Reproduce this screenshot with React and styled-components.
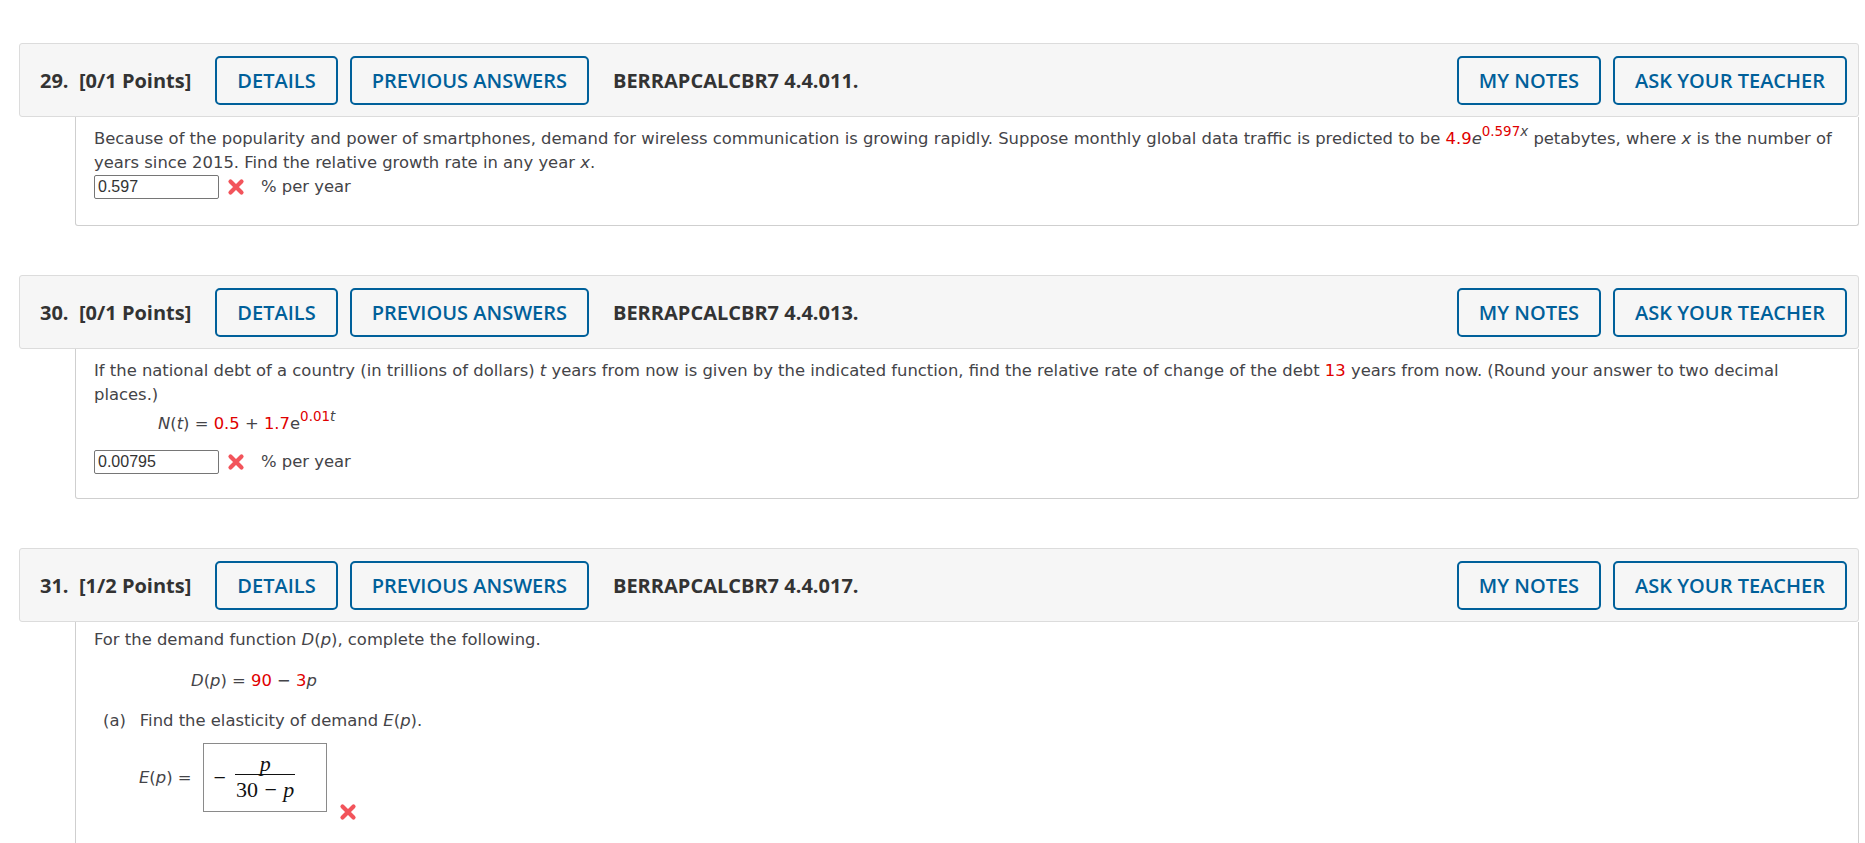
import React from 'react';
import styled, { createGlobalStyle } from 'styled-components';

const GlobalStyle = createGlobalStyle`
  body {
    margin: 0;
    background: #ffffff;
  }
`;

const Page = styled.div`
  padding: 43px 6px 0 19px;
  display: flex;
  flex-direction: column;
  gap: 49px;
`;

const Question = styled.section`
  display: flex;
  flex-direction: column;
`;

const Header = styled.div`
  display: flex;
  align-items: center;
  height: 72px;
  padding: 0 11px 0 20px;
  background: #f6f6f6;
  border: 1px solid #dcdcdc;
  border-radius: 3px;
  font-family: 'Open Sans', sans-serif;
`;

const Label = styled.span`
  font-size: 20px;
  font-weight: 700;
  color: #333333;
  white-space: pre;
  margin-right: 24px;
`;

const Code = styled.span`
  font-size: 20px;
  font-weight: 700;
  color: #333333;
  margin-left: 24px;
  flex: 1;
`;

const Button = styled.button`
  height: 49px;
  padding: 0 20px;
  margin-left: ${p => (p.$first ? '0' : '12px')};
  background: transparent;
  border: 2px solid #00609a;
  border-radius: 5px;
  color: #00609a;
  font-family: 'Open Sans', sans-serif;
  font-size: 20px;
  font-weight: 600;
  cursor: pointer;
`;

const Body = styled.div`
  margin-left: 56px;
  border: 1px solid #cfcfcf;
  border-top: none;
  border-radius: 0 0 3px 3px;
  padding: ${p => p.$pad || '10px 18px 26px'};
  font-family: 'DejaVu Sans', Verdana, sans-serif;
  font-size: 16.4px;
  line-height: 24px;
  color: #444448;
`;

const Para = styled.p`
  margin: 0;
`;

const Red = styled.span`
  color: #e00000;
`;

const Sup = styled.sup`
  font-size: 0.82em;
  line-height: 0;
  vertical-align: 0.6em;
`;

const Formula = styled.div`
  margin: ${p => p.$m || '5px 0 0 64px'};
`;

const AnswerRow = styled.div`
  display: flex;
  align-items: center;
  margin-top: ${p => p.$mt || '0'};
`;

const Input = styled.div`
  width: 125px;
  height: 24px;
  box-sizing: border-box;
  border: 1px solid #767676;
  border-radius: 2px;
  padding: 0 3px;
  font-family: 'Liberation Sans', Arial, sans-serif;
  font-size: 16px;
  line-height: 22px;
  color: #333;
`;

const Unit = styled.span`
  margin-left: 16px;
`;

const Part = styled.div`
  display: flex;
  gap: 14px;
  margin: 16px 0 0 9px;
`;

const MathRow = styled.div`
  display: flex;
  align-items: center;
  margin: 10px 0 0 45px;
`;

const MathBox = styled.div`
  display: flex;
  align-items: center;
  width: 124px;
  height: 69px;
  box-sizing: border-box;
  border: 1px solid #8a8a8a;
  padding-left: 10px;
  margin-left: 11px;
  font-family: 'Liberation Serif', 'Times New Roman', serif;
  font-size: 22px;
  color: #111;
`;

const Frac = styled.span`
  display: inline-flex;
  flex-direction: column;
  align-items: center;
  margin-left: 9px;
`;

const Num = styled.span`
  font-style: italic;
  line-height: 20px;
  border-bottom: 1.3px solid #111;
  align-self: stretch;
  text-align: center;
`;

const Den = styled.span`
  line-height: 22px;
  padding: 4px 1px 0;
  word-spacing: 1px;
`;

const Wrong = () => (
  <svg width="18" height="18" viewBox="0 0 18 18">
    <path d="M3.5 3.5 L14.5 14.5 M14.5 3.5 L3.5 14.5" stroke="#f2545b" strokeWidth="4.2" strokeLinecap="round" />
  </svg>
);

const IconWrap = styled.span`
  display: inline-flex;
  margin-left: ${p => p.$ml || '8px'};
  align-self: ${p => p.$self || 'center'};
  margin-bottom: ${p => p.$mb || '0'};
`;

function QHeader({ num, pts, code }) {
  return (
    <Header>
      <Label>{`${num}.  [${pts} Points]`}</Label>
      <Button $first>DETAILS</Button>
      <Button>PREVIOUS ANSWERS</Button>
      <Code>{code}</Code>
      <Button $first>MY NOTES</Button>
      <Button>ASK YOUR TEACHER</Button>
    </Header>
  );
}

export default function App() {
  return (
    <>
      <GlobalStyle />
      <Page>
        <Question>
          <QHeader num="29" pts="0/1" code="BERRAPCALCBR7 4.4.011." />
          <Body>
            <Para>
              Because of the popularity and power of smartphones, demand for wireless communication is growing rapidly. Suppose monthly global data traffic is predicted to be{' '}
              <Red>4.9</Red><i>e</i><Sup><Red>0.597</Red><i>x</i></Sup> petabytes, where <i>x</i> is the number of years since 2015. Find the relative growth rate in any year <i>x</i>.
            </Para>
            <AnswerRow>
              <Input>0.597</Input>
              <IconWrap><Wrong /></IconWrap>
              <Unit>% per year</Unit>
            </AnswerRow>
          </Body>
        </Question>

        <Question>
          <QHeader num="30" pts="0/1" code="BERRAPCALCBR7 4.4.013." />
          <Body $pad="10px 18px 24px">
            <Para>
              If the national debt of a country (in trillions of dollars) <i>t</i> years from now is given by the indicated function, find the relative rate of change of the debt <Red>13</Red> years from now. (Round your answer to two decimal places.)
            </Para>
            <Formula>
              <i>N</i>(<i>t</i>) = <Red>0.5</Red> + <Red>1.7</Red>e<Sup><Red>0.01</Red><i>t</i></Sup>
            </Formula>
            <AnswerRow $mt="14px">
              <Input>0.00795</Input>
              <IconWrap><Wrong /></IconWrap>
              <Unit>% per year</Unit>
            </AnswerRow>
          </Body>
        </Question>

        <Question>
          <QHeader num="31" pts="1/2" code="BERRAPCALCBR7 4.4.017." />
          <Body $pad="6px 18px 60px">
            <Para>
              For the demand function <i>D</i>(<i>p</i>), complete the following.
            </Para>
            <Formula $m="17px 0 0 97px">
              <i>D</i>(<i>p</i>) = <Red>90</Red> − <Red>3</Red><i>p</i>
            </Formula>
            <Part>
              <span>(a)</span>
              <span>Find the elasticity of demand <i>E</i>(<i>p</i>).</span>
            </Part>
            <MathRow>
              <span><i>E</i>(<i>p</i>) =</span>
              <MathBox>
                <span>−</span>
                <Frac>
                  <Num>p</Num>
                  <Den>30 − <i>p</i></Den>
                </Frac>
              </MathBox>
              <IconWrap $ml="12px" $self="flex-end" $mb="-9px"><Wrong /></IconWrap>
            </MathRow>
          </Body>
        </Question>
      </Page>
    </>
  );
}
